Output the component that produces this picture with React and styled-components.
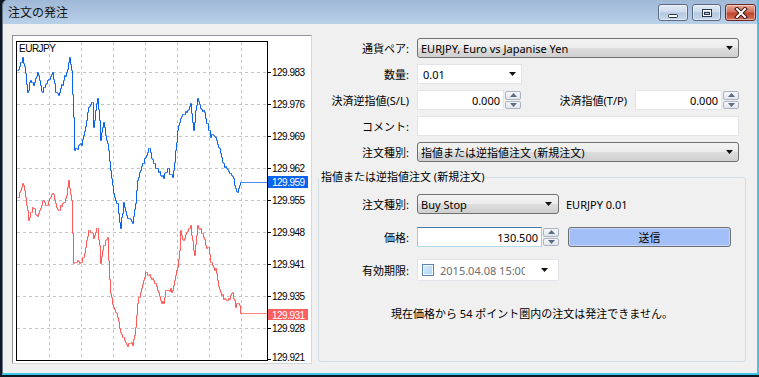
import React from 'react';
import styled, { createGlobalStyle } from 'styled-components';

const GlobalStyle = createGlobalStyle`
  body {
    margin: 0;
    background: #0d1822;
    font-family: "Noto Sans", "Noto Sans CJK JP", sans-serif;
    font-size: 11px;
    color: #000;
  }
`;

const Window = styled.div`
  width: 757px;
  height: 375px;
  margin-left: 2px;
  box-sizing: border-box;
  border-left: 1px solid #6b7a8a;
  border-right: 2px solid #3fc4ec;
  border-bottom: 2px solid #3fc4ec;
  border-top-left-radius: 5px;
  display: flex;
  flex-direction: column;
  overflow: hidden;
`;

const TitleBar = styled.div`
  height: 24px;
  flex-shrink: 0;
  display: flex;
  justify-content: space-between;
  align-items: flex-start;
  padding: 0 1px 0 5px;
  background: linear-gradient(#9fb8d6, #b9d0e9);
`;

const Title = styled.div`
  font-family: "Noto Sans CJK JP", sans-serif;
  font-size: 12px;
  line-height: 24px;
  color: #111;
`;

const CapButtons = styled.div`
  display: flex;
  gap: 4px;
  margin-top: 4px;
`;

const CapButton = styled.div`
  width: ${(p) => p.$w}px;
  height: 17px;
  box-sizing: border-box;
  border: 1px solid ${(p) => (p.$close ? '#6b2a20' : '#5a6a84')};
  border-radius: 3px;
  display: flex;
  align-items: center;
  justify-content: center;
  box-shadow: inset 0 0 0 1px rgba(255, 255, 255, 0.45);
  background: ${(p) =>
    p.$close
      ? 'linear-gradient(#e9a898, #d0705c 48%, #c0432b 52%, #d2715f)'
      : 'linear-gradient(#e2ebf6, #cad9ec 48%, #b4c8e1 52%, #c8d8ec)'};
`;

const Client = styled.div`
  flex: 1;
  background: #f0f0f0;
  display: flex;
  align-items: flex-start;
  gap: 6px;
  padding: 11px 0 0 9px;
`;

const ChartFrame = styled.div`
  width: 300px;
  height: 329px;
  box-sizing: border-box;
  border: 1px solid;
  border-color: #8f949b #d4d8dc #d4d8dc #8f949b;
  background: #fff;

  svg {
    display: block;
  }
`;

const Form = styled.div`
  width: 428px;
  padding-top: 3px;
  display: flex;
  flex-direction: column;
`;

const Rows = styled.div`
  display: flex;
  flex-direction: column;
  gap: 6px;
`;

const Row = styled.div`
  display: flex;
  align-items: center;
  height: ${(p) => p.$h || 20}px;
  padding-right: 7px;
  margin-top: ${(p) => p.$mt || 0}px;
`;

const Label = styled.div`
  width: ${(p) => p.$w || 91}px;
  flex-shrink: 0;
  text-align: right;
  margin-right: 8px;
  white-space: nowrap;
`;

const SideLabel = styled.div`
  margin-left: auto;
  margin-right: 8px;
  white-space: nowrap;
`;

const Select = styled.div`
  width: ${(p) => p.$w}px;
  height: 20px;
  box-sizing: border-box;
  display: flex;
  align-items: center;
  justify-content: space-between;
  padding: 0 ${(p) => p.$pr || 4}px 0 3px;
  border: 1px solid #707070;
  border-radius: 3px;
  background: linear-gradient(#f3f3f3, #ebebeb 50%, #dddddd 51%, #cfcfcf);
`;

const Combo = styled(Select)`
  border-color: #e2e4ea;
  border-radius: 0;
  background: #fff;
  padding-left: 5px;
`;

const Field = styled.div`
  width: ${(p) => p.$w}px;
  height: 20px;
  box-sizing: border-box;
  display: flex;
  align-items: center;
  justify-content: ${(p) => (p.$right ? 'flex-end' : 'flex-start')};
  padding: 0 3px;
  border: 1px solid;
  border-color: ${(p) =>
    p.$focus ? '#3d7bad #a4c9e3 #b7d9ed #a4c9e3' : '#e2e4ea'};
  background: #fff;
`;

const Spinner = styled.div`
  width: 17px;
  height: 20px;
  box-sizing: border-box;
  display: flex;
  flex-direction: column;
  gap: 1px;
  padding: 1px 0 1px 1px;
`;

const SpinBtn = styled.div`
  flex: 1;
  border: 1px solid #a9b3c2;
  border-radius: 2px;
  background: linear-gradient(#f6f7f9, #e2e6ec);
  display: flex;
  align-items: center;
  justify-content: center;
`;

const Group = styled.fieldset`
  margin: 7px 0 0;
  padding: 9px 0 39px;
  border: 1px solid #d5dfe5;
  border-radius: 3px;
  min-width: 0;
`;

const Legend = styled.legend`
  padding: 0 2px;
  line-height: 16px;
`;

const Info = styled.div`
  margin-left: 7px;
`;

const SendButton = styled.div`
  width: 163px;
  height: 20px;
  margin-left: 9px;
  box-sizing: border-box;
  border: 1px solid #707070;
  border-radius: 3px;
  background: #a3bff8;
  box-shadow: inset 0 0 0 1px #c3d5fb;
  display: flex;
  align-items: center;
  justify-content: center;
`;

const DateBox = styled.div`
  width: 142px;
  height: 22px;
  box-sizing: border-box;
  border: 1px solid #e2e4ea;
  background: #fff;
  display: flex;
  align-items: center;
  padding-left: 4px;
`;

const Check = styled.div`
  width: 12px;
  height: 12px;
  flex-shrink: 0;
  box-sizing: border-box;
  border: 1px solid #5b82b0;
  background: linear-gradient(135deg, #dcecfb, #a9d2f3);
  box-shadow: inset 0 0 0 1px #eef6fd;
`;

const DateText = styled.div`
  width: 85px;
  flex-shrink: 0;
  margin-left: 6px;
  overflow: hidden;
  white-space: nowrap;
  color: #6d6d6d;
`;

const DateArrow = styled.div`
  display: flex;
  margin-left: 16px;
`;

const Message = styled.div`
  margin-top: 25px;
  line-height: 16px;
  text-align: center;
`;

const Arrow = () => (
  <svg width="8" height="5" viewBox="0 0 8 5">
    <path d="M0 0H7L3.5 4Z" fill="#111" />
  </svg>
);

const Tri = ({ up }) => (
  <svg width="7" height="4" viewBox="0 0 7 4">
    <path d={up ? 'M0 4H7L3.5 0Z' : 'M0 0H7L3.5 4Z'} fill="#5c6c84" />
  </svg>
);

const Spin = () => (
  <Spinner>
    <SpinBtn>
      <Tri up />
    </SpinBtn>
    <SpinBtn>
      <Tri />
    </SpinBtn>
  </Spinner>
);

// chart data, page pixel coordinates
const bluePts = [
  [17, 70], [20, 62], [22, 57], [24, 66], [25, 73], [27, 92], [30, 80], [33, 85], [35, 78],
  [37, 72], [40, 85], [42, 92], [45, 84], [47, 80], [50, 76], [52, 72], [55, 92], [58, 95],
  [60, 88], [63, 80], [66, 72], [69, 57], [71, 70], [73, 117], [74, 150], [76, 148], [78, 145],
  [81, 145], [83, 135], [86, 120], [88, 107], [90, 104], [92, 102], [93, 127], [95, 110],
  [97, 98], [99, 120], [100, 140], [103, 122], [105, 135], [107, 143], [108, 150], [110, 170],
  [113, 193], [117, 203], [120, 228], [123, 202], [127, 218], [132, 223], [135, 203],
  [137, 180], [140, 170], [143, 163], [146, 155], [148, 148], [150, 152], [153, 163],
  [156, 168], [158, 172], [161, 176], [163, 178], [165, 172], [167, 168], [170, 174],
  [172, 177], [174, 162], [175, 150], [177, 130], [180, 118], [183, 114], [187, 110],
  [190, 103], [193, 130], [195, 110], [197, 98], [200, 108], [203, 110], [205, 118],
  [207, 123], [210, 137], [213, 135], [215, 137], [218, 147], [220, 153], [223, 163],
  [226, 168], [230, 173], [233, 178], [235, 188], [237, 192], [239, 185], [240, 182], [268, 182],
];

const redPts = [
  [17, 197], [20, 190], [22, 183], [24, 190], [25, 197], [28, 220], [30, 212], [33, 208],
  [36, 215], [38, 213], [41, 205], [43, 200], [46, 205], [49, 198], [52, 193], [55, 203],
  [58, 210], [60, 205], [63, 202], [66, 195], [68, 180], [71, 200], [73, 263], [75, 262],
  [77, 260], [80, 262], [83, 257], [86, 240], [88, 230], [91, 232], [93, 238], [95, 232],
  [97, 228], [99, 245], [100, 263], [103, 245], [105, 240], [107, 237], [108, 260],
  [110, 293], [113, 307], [117, 317], [120, 332], [124, 340], [127, 346], [130, 343],
  [132, 345], [134, 335], [135, 327], [137, 303], [140, 292], [143, 280], [145, 272],
  [148, 275], [150, 277], [155, 283], [158, 292], [160, 300], [163, 303], [165, 290],
  [168, 290], [172, 290], [175, 275], [177, 267], [179, 250], [180, 230], [183, 240],
  [186, 232], [188, 228], [190, 225], [192, 240], [194, 255], [197, 225], [200, 228],
  [203, 237], [205, 245], [208, 247], [210, 262], [213, 267], [215, 268], [217, 280],
  [220, 292], [224, 298], [227, 300], [230, 295], [232, 292], [234, 300], [235, 307],
  [237, 303], [239, 305], [240, 313], [268, 313],
];

const noise = (x, seed) => {
  const s = Math.sin(x * 12.9898 + seed * 78.233) * 43758.5453;
  return s - Math.floor(s);
};

function stepPath(pts, seed) {
  let d = `M${pts[0][0] + 0.5} ${pts[0][1] + 0.5}`;
  for (let i = 1; i < pts.length; i++) {
    const [x0, y0] = pts[i - 1];
    const [x1, y1] = pts[i];
    const dx = x1 - x0;
    for (let k = 1; k <= dx; k++) {
      let y = y0 + ((y1 - y0) * k) / dx;
      if (k < dx && dx < 20) y += Math.round((noise(x0 + k, seed) - 0.5) * 5);
      d += `H${x0 + k + 0.5}V${Math.round(y) + 0.5}`;
    }
  }
  return d;
}

const gridX = [49, 81, 113, 145, 177, 209, 241];
const levels = [
  [72, '129.983'], [104, '129.976'], [136, '129.969'], [168, '129.962'], [200, '129.955'],
  [232, '129.948'], [264, '129.941'], [296, '129.935'], [328, '129.928'],
];

const Chart = () => (
  <svg width="298" height="327" viewBox="13 36 298 327">
    <defs>
      <clipPath id="plot">
        <rect x="17" y="42" width="250" height="318" />
      </clipPath>
    </defs>
    <g stroke="#c4c4c4" strokeDasharray="3 3">
      {gridX.map((x) => (
        <line key={x} x1={x + 0.5} y1="42" x2={x + 0.5} y2="360" />
      ))}
      {levels.map(([y]) => (
        <line key={y} x1="17" y1={y + 0.5} x2="267" y2={y + 0.5} />
      ))}
    </g>
    <g clipPath="url(#plot)" fill="none" strokeWidth="1">
      <path d={stepPath(bluePts, 1)} stroke="#0a62f0" />
      <path d={stepPath(redPts, 2)} stroke="#ff5a5a" />
    </g>
    <rect x="16.5" y="41.5" width="251" height="319" fill="none" stroke="#000" />
    <g stroke="#000">
      {levels.map(([y]) => (
        <line key={y} x1="267" y1={y + 0.5} x2="271" y2={y + 0.5} />
      ))}
      <line x1="267" y1="359.5" x2="271" y2="359.5" />
    </g>
    <g fontFamily="Liberation Sans, sans-serif" fontSize="10" letterSpacing="-0.5" fill="#000">
      <text x="19" y="52">EURJPY</text>
      {levels.map(([y, t]) => (
        <text key={t} x="272" y={y + 4}>
          {t}
        </text>
      ))}
      <text x="272" y="361">129.921</text>
    </g>
    <rect x="268" y="176" width="40" height="12" fill="#0a62f0" />
    <text x="272" y="186" fontFamily="Liberation Sans, sans-serif" fontSize="10" letterSpacing="-0.5" fill="#fff">
      129.959
    </text>
    <rect x="268" y="309" width="40" height="11" fill="#ff5f5f" />
    <text x="272" y="318.5" fontFamily="Liberation Sans, sans-serif" fontSize="10" letterSpacing="-0.5" fill="#fff">
      129.931
    </text>
  </svg>
);

export default function App() {
  return (
    <>
      <GlobalStyle />
      <Window>
        <TitleBar>
          <Title>注文の発注</Title>
          <CapButtons>
            <CapButton $w={30}>
              <svg width="12" height="12" viewBox="0 0 12 12">
                <rect x="1.5" y="7.5" width="9" height="3" rx="1" fill="#fff" stroke="#2a3446" />
              </svg>
            </CapButton>
            <CapButton $w={29}>
              <svg width="12" height="12" viewBox="0 0 12 12">
                <rect x="1.5" y="2.5" width="9" height="7" fill="none" stroke="#2a3446" />
                <rect x="2.5" y="3.5" width="7" height="5" fill="none" stroke="#fff" />
                <rect x="3.5" y="5.5" width="5" height="2" fill="none" stroke="#2a3446" />
              </svg>
            </CapButton>
            <CapButton $w={31} $close>
              <svg width="14" height="12" viewBox="0 0 14 12">
                <path d="M3 2L11 10M11 2L3 10" stroke="#3a1410" strokeWidth="4" strokeLinecap="square" />
                <path d="M3 2L11 10M11 2L3 10" stroke="#fff" strokeWidth="2" strokeLinecap="square" />
              </svg>
            </CapButton>
          </CapButtons>
        </TitleBar>
        <Client>
          <ChartFrame>
            <Chart />
          </ChartFrame>
          <Form>
            <Rows>
              <Row>
                <Label>通貨ペア:</Label>
                <Select $w={323}>
                  EURJPY, Euro vs Japanise Yen
                  <Arrow />
                </Select>
              </Row>
              <Row>
                <Label>数量:</Label>
                <Combo $w={105}>
                  0.01
                  <Arrow />
                </Combo>
              </Row>
              <Row>
                <Label>決済逆指値(S/L)</Label>
                <Field $w={87} $right>
                  0.000
                </Field>
                <Spin />
                <SideLabel>決済指値(T/P)</SideLabel>
                <Field $w={87} $right>
                  0.000
                </Field>
                <Spin />
              </Row>
              <Row>
                <Label>コメント:</Label>
                <Field $w={323} />
              </Row>
              <Row>
                <Label>注文種別:</Label>
                <Select $w={323}>
                  指値または逆指値注文 (新規注文)
                  <Arrow />
                </Select>
              </Row>
            </Rows>
            <Group>
              <Legend>指値または逆指値注文 (新規注文)</Legend>
              <Row>
                <Label $w={90}>注文種別:</Label>
                <Select $w={142} $pr={5}>
                  Buy Stop
                  <Arrow />
                </Select>
                <Info>EURJPY 0.01</Info>
              </Row>
              <Row $mt={13}>
                <Label $w={90}>価格:</Label>
                <Field $w={125} $right $focus>
                  130.500
                </Field>
                <Spin />
                <SendButton>送信</SendButton>
              </Row>
              <Row $mt={12} $h={22}>
                <Label $w={90}>有効期限:</Label>
                <DateBox>
                  <Check />
                  <DateText>2015.04.08 15:00</DateText>
                  <DateArrow>
                    <Arrow />
                  </DateArrow>
                </DateBox>
              </Row>
              <Message>現在価格から 54 ポイント圏内の注文は発注できません。</Message>
            </Group>
          </Form>
        </Client>
      </Window>
    </>
  );
}
